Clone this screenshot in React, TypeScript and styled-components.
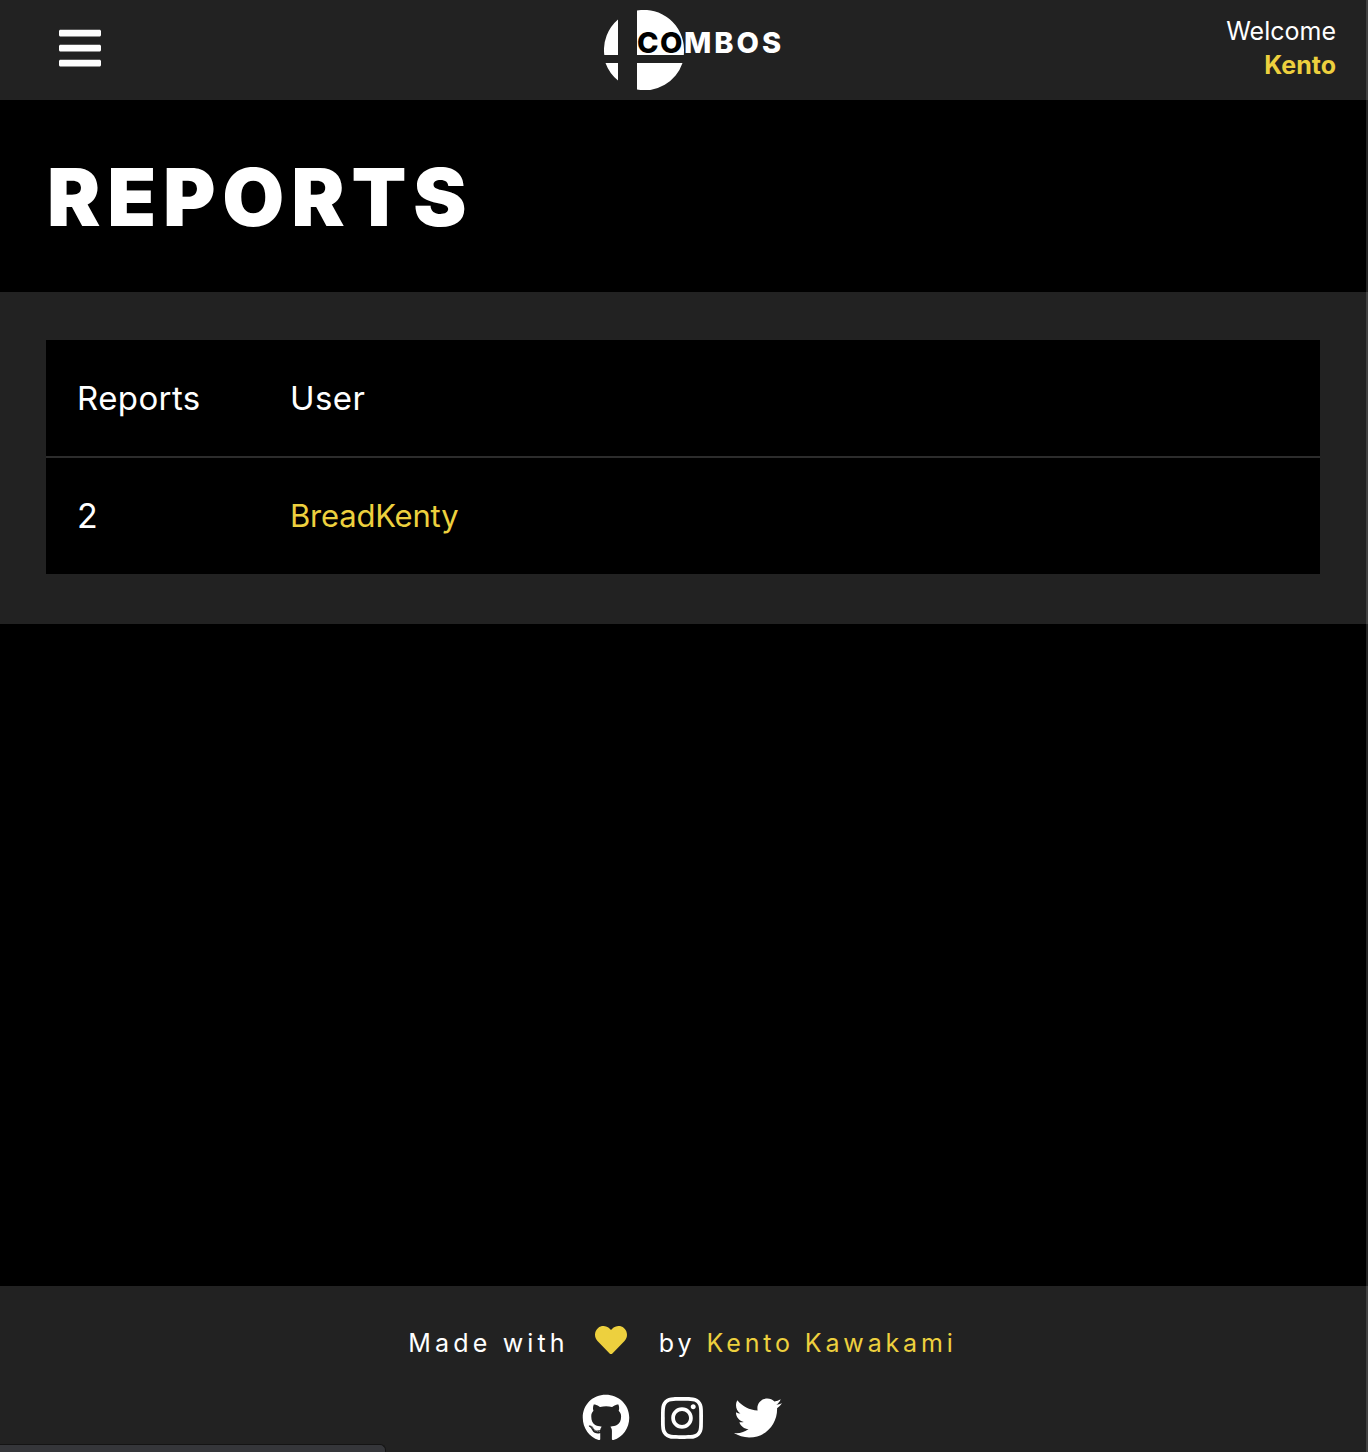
import React from 'react';
import styled, { createGlobalStyle } from 'styled-components';
import { FaBars, FaGithub, FaHeart, FaInstagram, FaTwitter } from 'react-icons/fa';

const yellow = '#edd03e';
const panel = '#222222';

const GlobalStyle = createGlobalStyle`
    html, body {
        margin: 0;
        background: #000;
        color: #fff;
        font-family: Inter, "Liberation Sans", sans-serif;
    }
    * {
        box-sizing: border-box;
    }
`;

const Page = styled.div`
    position: relative;
    display: flex;
    flex-direction: column;
    height: 100vh;
    overflow: hidden;
`;

const Header = styled.header`
    display: grid;
    grid-template-columns: 1fr auto 1fr;
    align-items: center;
    height: 100px;
    padding: 0 32px 0 59px;
    background: ${panel};
`;

const MenuButton = styled(FaBars)`
    display: block;
    width: 42px;
    height: 48px;
    margin-top: -4px;
    color: #fff;
`;

const Logo = styled.div`
    position: relative;
    width: 178px;
    height: 80px;
    margin-left: -9px;
`;

const LogoMark = styled.svg`
    display: block;
    width: 80px;
    height: 80px;
`;

const LogoText = styled.div`
    position: absolute;
    top: 15px;
    left: 33px;
    font-size: 29px;
    line-height: 36px;
    font-weight: 800;
    letter-spacing: 3px;
    white-space: nowrap;
    color: #fff;
`;

const LogoInk = styled.span`
    color: #000;
    letter-spacing: 1.5px;
`;

const Welcome = styled.div`
    justify-self: end;
    text-align: right;
    font-size: 25px;
    line-height: 34px;
    margin-top: -5px;
`;

const WelcomeName = styled.div`
    font-weight: 700;
    color: ${yellow};
`;

const Hero = styled.section`
    display: flex;
    align-items: center;
    height: 192px;
    padding: 2px 0 0 47px;
    background: #000;
`;

const Title = styled.h1`
    margin: 0;
    font-size: 80px;
    line-height: 1;
    font-weight: 900;
    letter-spacing: 6.8px;
    color: #fff;
`;

const TableSection = styled.section`
    height: 332px;
    padding: 48px 48px 50px 46px;
    background: ${panel};
`;

const Table = styled.div`
    background: #000;
`;

const HeadRow = styled.div`
    display: grid;
    grid-template-columns: 213px 1fr;
    align-items: center;
    height: 118px;
    padding-left: 31px;
    font-size: 33px;
    letter-spacing: 0.4px;
    border-bottom: 2px solid #2c2c2c;
`;

const BodyRow = styled.div`
    display: grid;
    grid-template-columns: 213px 1fr;
    align-items: center;
    height: 116px;
    padding: 0 0 2px 31px;
    font-size: 31px;
    letter-spacing: -0.2px;
`;

const Count = styled.span`
    font-size: 34px;
`;

const UserLink = styled.span`
    color: ${yellow};
`;

const Spacer = styled.main`
    flex: 1;
    background: #000;
`;

const Footer = styled.footer`
    display: flex;
    flex-direction: column;
    align-items: center;
    height: 166px;
    padding-top: 38px;
    background: ${panel};
`;

const Credit = styled.div`
    display: flex;
    align-items: center;
    height: 38px;
    margin-right: 3px;
    font-size: 25px;
    letter-spacing: 4px;
    white-space: nowrap;
`;

const Lead = styled.span`
    letter-spacing: 4.15px;
`;

const Heart = styled(FaHeart)`
    width: 32px;
    height: 32px;
    margin: -6px 32px 0 26px;
    color: ${yellow};
`;

const Author = styled.span`
    margin-left: 11px;
    letter-spacing: 3.85px;
    color: ${yellow};
`;

const Socials = styled.div`
    display: flex;
    align-items: center;
    gap: 28px;
    margin: 32px 4px 0 0;
    color: #fff;
    svg {
        display: block;
        width: 48px;
        height: 48px;
    }
`;

const ScrollEdge = styled.div`
    position: absolute;
    top: 0;
    right: 0;
    bottom: 0;
    width: 2px;
    background: rgba(255, 255, 255, 0.14);
`;

const StatusBubble = styled.div`
    position: absolute;
    left: 0;
    bottom: 0;
    width: 386px;
    height: 8px;
    background: #35363a;
    border-top: 1px solid #141414;
    border-right: 1px solid #141414;
    border-top-right-radius: 6px;
`;

const App = () => {
    return (
        <Page>
            <GlobalStyle />
            <Header>
                <MenuButton />
                <Logo>
                    <LogoMark viewBox="0 0 80 80">
                        <path
                            fill="#fff"
                            d="M33 0.500A40 40 0 0 1 80 40Q80 43 79.800 45H33Z M33 53H78.500A40 40 0 0 1 33 79.500Z M14 9.500V45H0.300A40 40 0 0 1 14 9.500Z M1.500 53H14V70.500A40 40 0 0 1 1.500 53Z"
                        />
                    </LogoMark>
                    <LogoText>
                        <LogoInk>CO</LogoInk>MBOS
                    </LogoText>
                </Logo>
                <Welcome>
                    Welcome
                    <WelcomeName>Kento</WelcomeName>
                </Welcome>
            </Header>
            <Hero>
                <Title>REPORTS</Title>
            </Hero>
            <TableSection>
                <Table>
                    <HeadRow>
                        <span>Reports</span>
                        <span>User</span>
                    </HeadRow>
                    <BodyRow>
                        <Count>2</Count>
                        <UserLink>BreadKenty</UserLink>
                    </BodyRow>
                </Table>
            </TableSection>
            <Spacer />
            <Footer>
                <Credit>
                    <Lead>Made with</Lead>
                    <Heart />
                    by
                    <Author>Kento Kawakami</Author>
                </Credit>
                <Socials>
                    <FaGithub />
                    <FaInstagram />
                    <FaTwitter />
                </Socials>
            </Footer>
            <ScrollEdge />
            <StatusBubble />
        </Page>
    );
};

export default App;
